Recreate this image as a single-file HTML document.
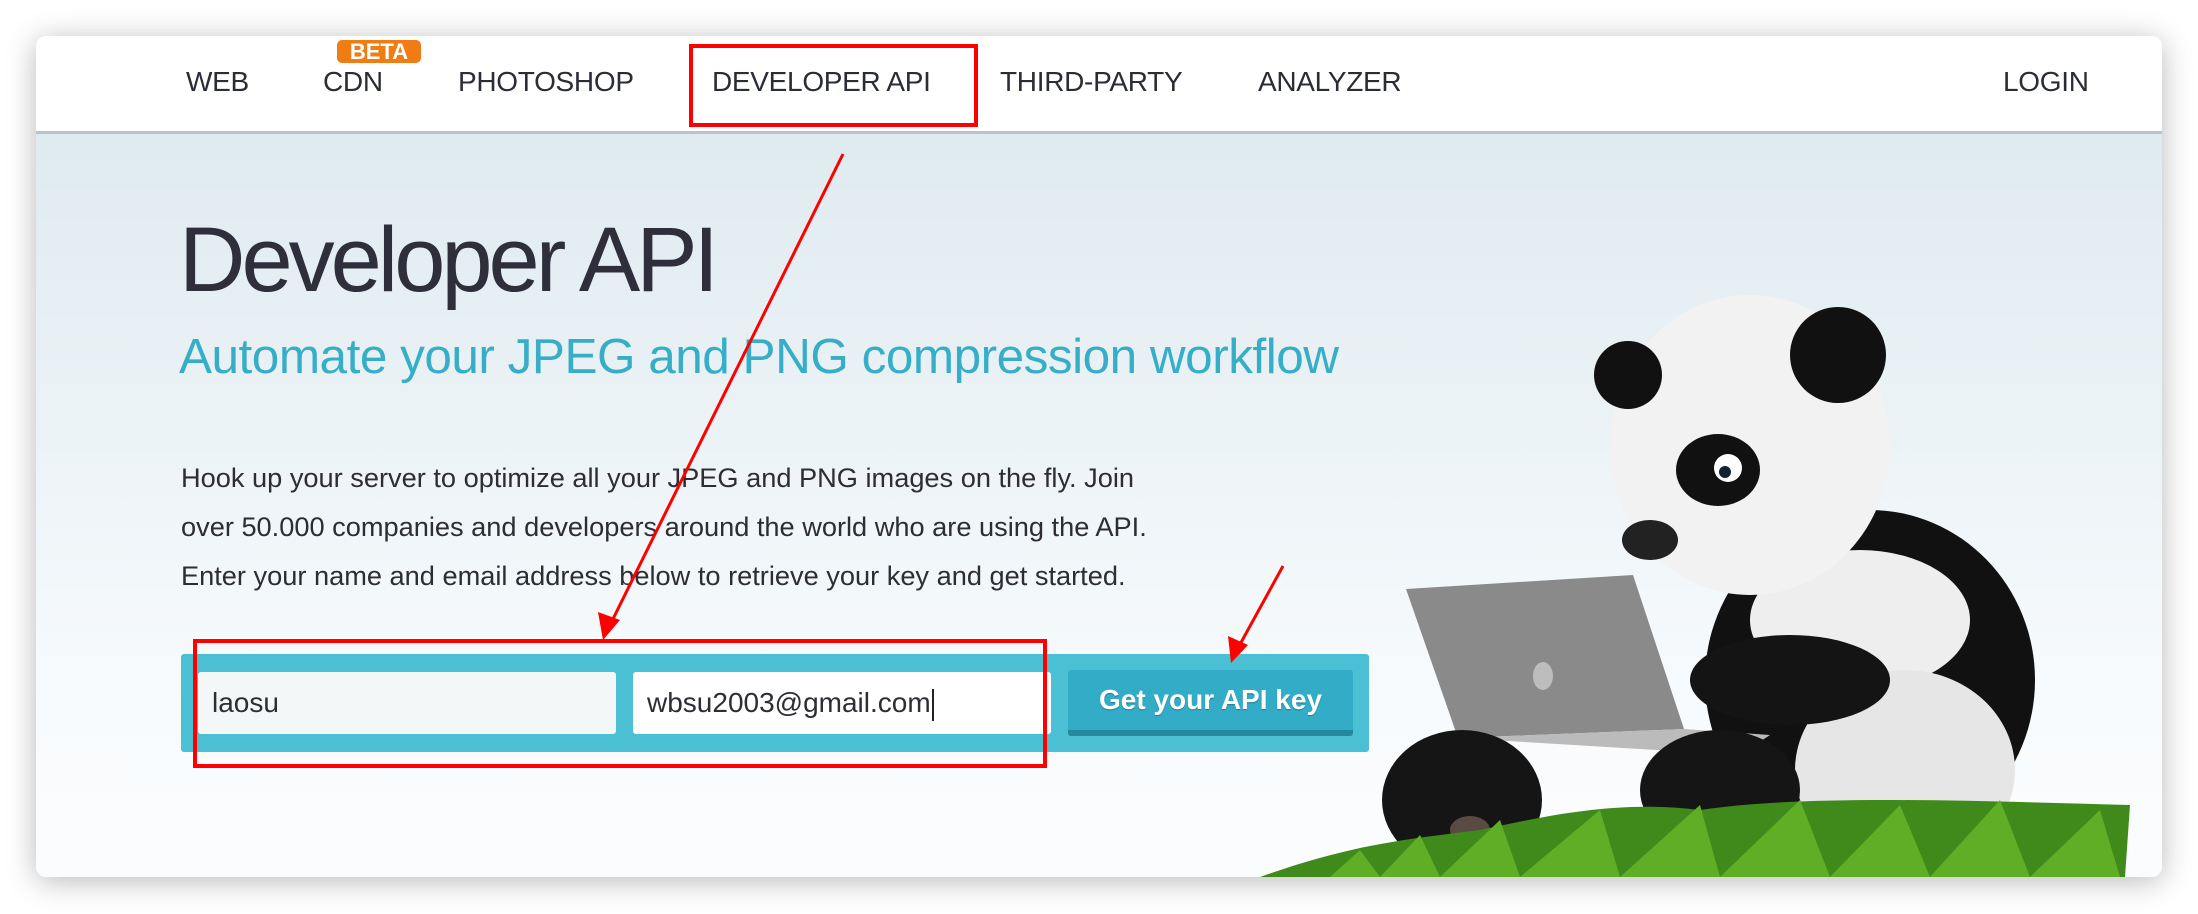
<!DOCTYPE html>
<html><head><meta charset="utf-8"><style>
html,body{margin:0;padding:0;width:2198px;height:914px;overflow:hidden;background:#fff;font-family:"Liberation Sans",sans-serif;}
.card{position:absolute;left:36px;top:36px;width:2126px;height:841px;border-radius:10px;overflow:hidden;box-shadow:0 4px 30px rgba(0,0,0,.28);background:linear-gradient(#dbe8ee 0%,#e9f1f5 40%,#f8fbfd 80%,#fbfcfe 100%);}
.nav{position:absolute;left:0;top:0;width:100%;height:95px;background:#fff;border-bottom:3px solid #b8c5cc;}
.nav span{position:absolute;top:30px;font-size:28px;color:#2b2d36;letter-spacing:-0.3px;}
.abs{position:absolute;}
</style></head><body>
<div class="card">
 <div class="nav">
  <span style="left:150px">WEB</span>
  <span style="left:287px">CDN</span>
  <div class="abs" style="left:301px;top:4px;width:84px;height:23px;background:#f07c14;border-radius:5px;color:#fff;font-size:22px;font-weight:bold;text-align:center;line-height:24px;">BETA</div>
  <span style="left:422px">PHOTOSHOP</span>
  <span style="left:676px">DEVELOPER API</span>
  <span style="left:964px">THIRD-PARTY</span>
  <span style="left:1222px">ANALYZER</span>
  <span style="left:1967px">LOGIN</span>
 </div>
 <div class="abs" style="left:143px;top:172px;font-size:92px;color:#2e2f3a;letter-spacing:-4px;white-space:nowrap;">Developer API</div>
 <div class="abs" style="left:143px;top:292px;font-size:49.5px;color:#37aec8;letter-spacing:-0.5px;white-space:nowrap;">Automate your JPEG and PNG compression workflow</div>
 <div class="abs" style="left:145px;top:417px;font-size:27.2px;line-height:49px;color:#2d2d33;white-space:nowrap;">Hook up your server to optimize all your JPEG and PNG images on the fly. Join<br>over 50.000 companies and developers around the world who are using the API.<br>Enter your name and email address below to retrieve your key and get started.</div>
 <div class="abs" style="left:145px;top:618px;width:1188px;height:98px;background:#4bbfd3;border-radius:3px;"></div>
 <div class="abs" style="left:162px;top:636px;width:418px;height:62px;background:#f4f7f8;border-radius:3px;font-size:28px;line-height:62px;color:#2d2d33;text-indent:14px;">laosu</div>
 <div class="abs" style="left:597px;top:636px;width:418px;height:62px;background:#fff;border-radius:3px;font-size:28px;line-height:62px;color:#2d2d33;text-indent:14px;">wbsu2003@gmail.com<span style="display:inline-block;width:2px;height:32px;background:#222;vertical-align:middle;margin-left:1px"></span></div>
 <div class="abs" style="left:1032px;top:634px;width:285px;height:60px;background:#33adc7;border-bottom:6px solid #25889c;border-radius:3px;font-size:28px;font-weight:bold;color:#fff;text-align:center;line-height:60px;text-shadow:0 1px 1px rgba(0,0,0,.3);">Get your API key</div>
 <svg class="abs" style="left:0;top:0" width="2126" height="841" viewBox="36 36 2126 841">
  <ellipse cx="1870" cy="680" rx="165" ry="170" fill="#111"/>
  <ellipse cx="1860" cy="620" rx="110" ry="70" fill="#eee"/>
  <ellipse cx="1905" cy="770" rx="110" ry="100" fill="#e6e6e6"/>
  <ellipse cx="1750" cy="445" rx="140" ry="150" fill="#f2f2f2"/>
  <circle cx="1628" cy="375" r="34" fill="#111"/>
  <circle cx="1838" cy="355" r="48" fill="#111"/>
  <ellipse cx="1718" cy="470" rx="42" ry="36" fill="#111"/>
  <circle cx="1728" cy="468" r="14" fill="#fff"/>
  <circle cx="1725" cy="472" r="6" fill="#123"/>
  <ellipse cx="1650" cy="540" rx="28" ry="20" fill="#222"/>
  <polygon points="1406,589 1633,575 1684,729 1458,738" fill="#8a8a8a"/>
  <polygon points="1458,738 1684,729 1770,735 1740,755" fill="#bbb"/>
  <ellipse cx="1543" cy="676" rx="10" ry="14" fill="#bdbdbd"/>
  <ellipse cx="1790" cy="680" rx="100" ry="45" fill="#141414"/>
  <ellipse cx="1462" cy="800" rx="80" ry="70" fill="#151515"/>
  <ellipse cx="1720" cy="790" rx="80" ry="60" fill="#151515"/>
  <ellipse cx="1470" cy="830" rx="20" ry="14" fill="#5a4a44"/>
  <path d="M1260,877 C1350,845 1400,840 1480,830 C1550,815 1620,800 1700,810 C1800,795 1950,800 2130,805 L2125,877 Z" fill="#3f8a1a"/>
  <path d="M1330,877 L1360,850 L1380,877 L1420,835 L1440,877 L1500,820 L1520,877 L1600,810 L1620,877 L1700,805 L1720,877 L1800,800 L1830,877 L1900,805 L1930,877 L2000,800 L2030,877 L2100,810 L2120,877Z" fill="#5fae25"/>
  <rect x="691" y="46" width="285" height="79" fill="none" stroke="#f00" stroke-width="4"/>
  <rect x="195" y="641" width="850" height="125" fill="none" stroke="#f00" stroke-width="4"/>
  <line x1="843" y1="154" x2="610" y2="625" stroke="#f00" stroke-width="3"/>
  <polygon points="603,640 598,612 620,620" fill="#f00"/>
  <line x1="1283" y1="566" x2="1238" y2="648" stroke="#f00" stroke-width="3"/>
  <polygon points="1231,663 1228,636 1248,645" fill="#f00"/>
 </svg>
</div>
</body></html>
